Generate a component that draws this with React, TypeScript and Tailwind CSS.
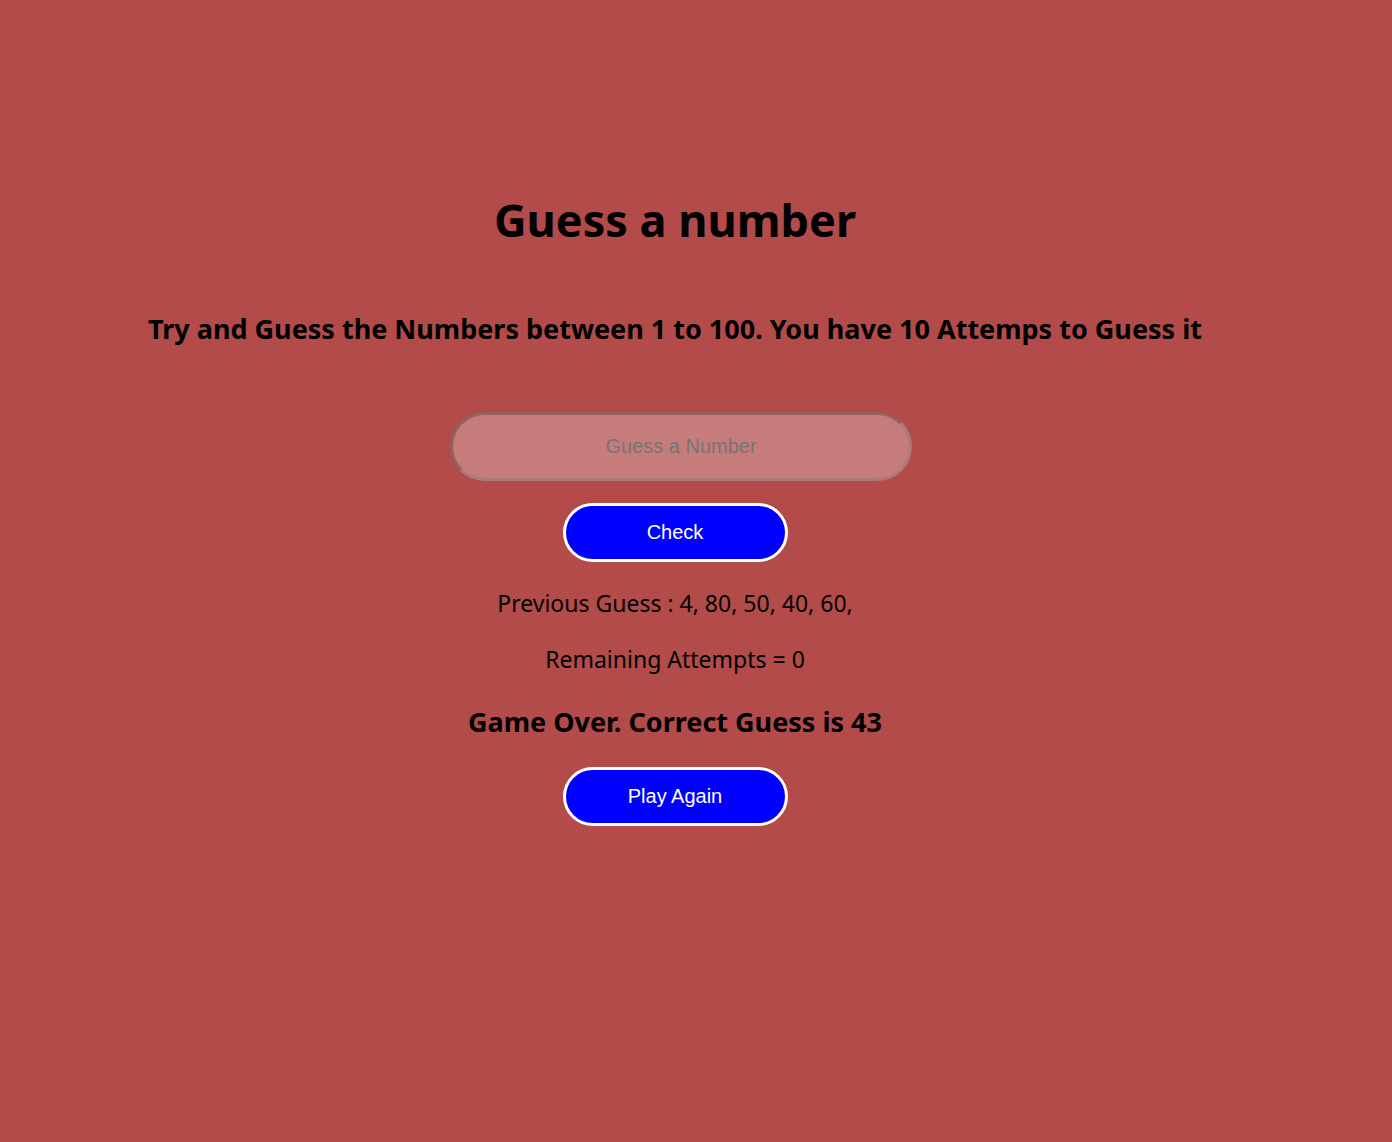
import { useState } from "react";

const buttonClass =
  "h-[59px] w-[225px] rounded-full border-3 border-white bg-[#0000ff] pb-0.5 font-['Liberation_Sans',Arial,sans-serif] text-xl text-white";

export default function App() {
  const [guess, setGuess] = useState("");

  return (
    <main className="flex min-h-screen flex-col items-center bg-[#b24b49] pt-[184px] pr-[42px] text-center font-['Segoe_UI','Noto_Sans','Open_Sans',sans-serif] text-black">
      <h1 className="text-[45px] leading-[72px] font-bold">Guess a number</h1>
      <h2 className="mt-[54px] text-[27px] leading-[38px] font-bold">
        Try and Guess the Numbers between 1 to 100. You have 10 Attemps to Guess it
      </h2>
      <form className="mt-16 flex flex-col items-center" onSubmit={(e) => e.preventDefault()}>
        <input
          type="text"
          aria-label="Guess a Number"
          placeholder="Guess a Number"
          value={guess}
          onChange={(e) => setGuess(e.target.value)}
          disabled
          className="ml-3 h-[69px] w-[462px] rounded-full border-3 border-[#767676]/30 [border-style:inset] bg-[#c67c7b] text-center font-['Liberation_Sans',Arial,sans-serif] text-xl placeholder:text-[#757575]"
        />
        <button type="submit" className={`mt-[22px] ${buttonClass}`}>
          Check
        </button>
      </form>
      <p className="mt-[25px] text-[23px] leading-8">Previous Guess : 4, 80, 50, 40, 60,</p>
      <p className="mt-6 text-[23px] leading-8">Remaining Attempts = 0</p>
      <h2 className="mt-7 text-[27px] leading-[38px] font-bold">Game Over. Correct Guess is 43</h2>
      <button type="button" className={`mt-[26px] ${buttonClass}`}>
        Play Again
      </button>
    </main>
  );
}
